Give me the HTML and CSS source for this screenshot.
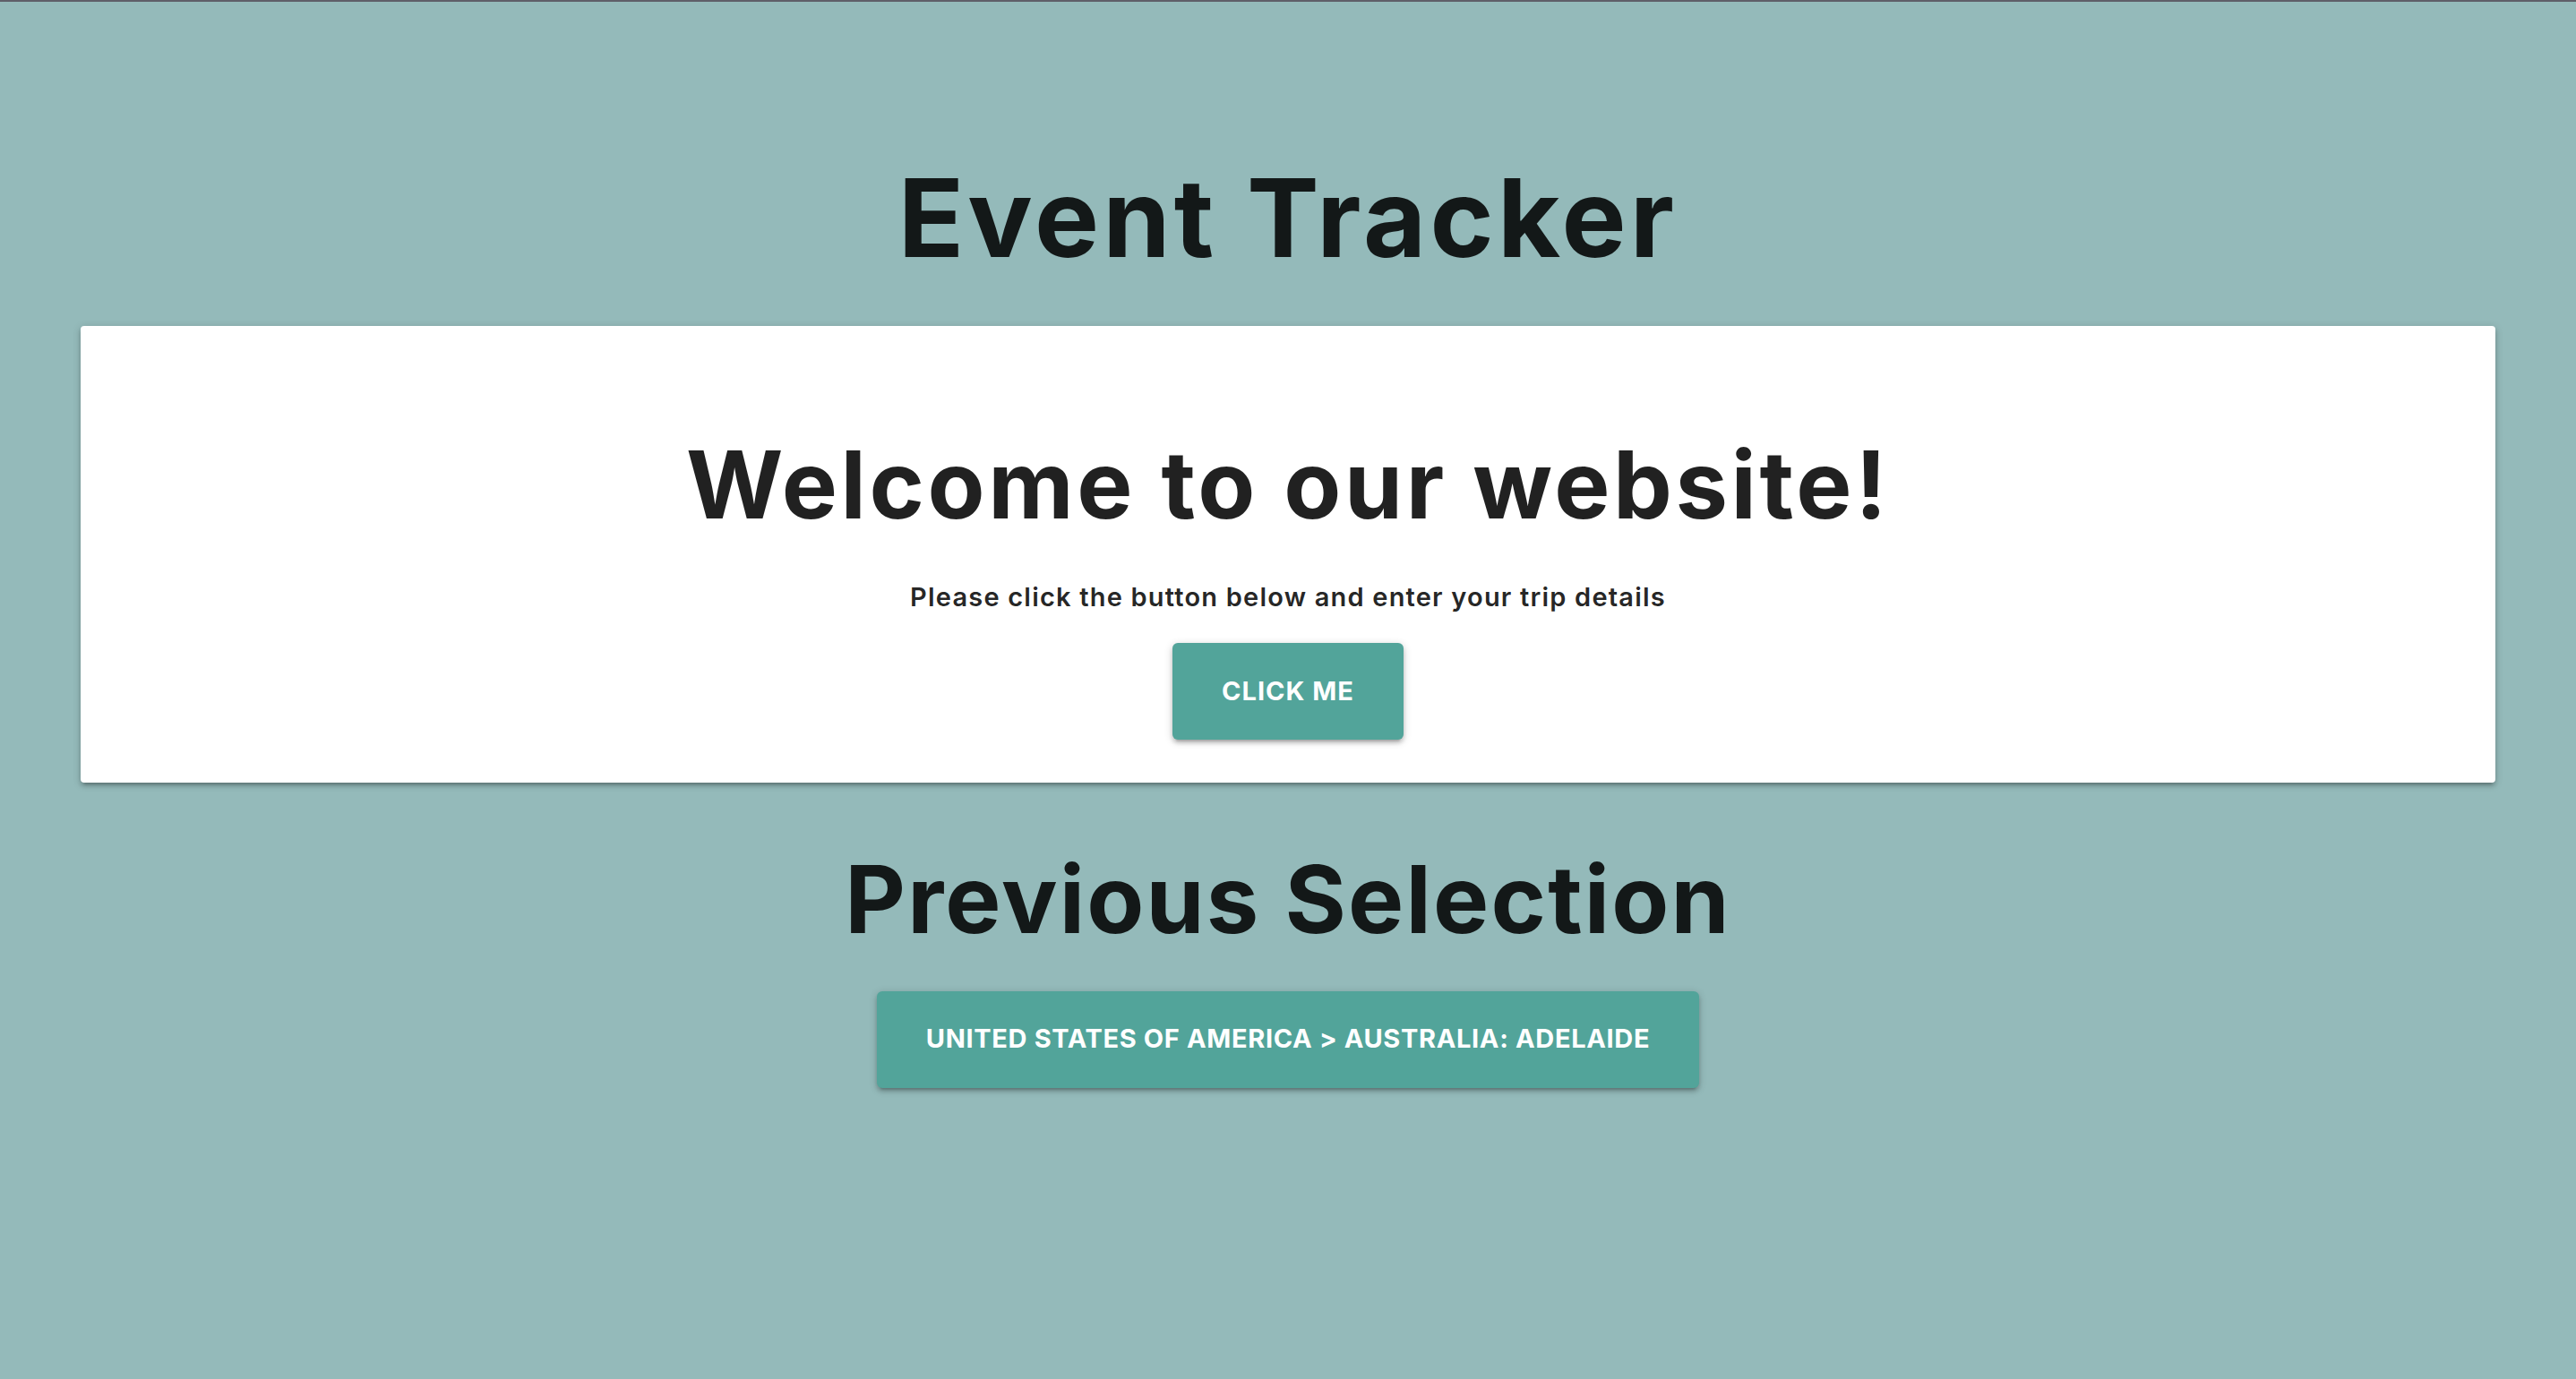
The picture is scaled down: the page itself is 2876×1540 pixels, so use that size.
FILE: index.html
```html
<!DOCTYPE html>
<html lang="en">
<head>
<meta charset="utf-8">
<title>Event Tracker</title>
<link rel="stylesheet" href="styles.css">
</head>
<body>
<div class="topline"></div>
<main class="page">
  <h1 class="title">Event Tracker</h1>
  <section class="card">
    <h2 class="heading welcome">Welcome to our website!</h2>
    <p class="subtitle">Please click the button below and enter your trip details</p>
    <button class="btn">Click me</button>
  </section>
  <h2 class="heading previous">Previous Selection</h2>
  <button class="btn btn-wide">United States of America &gt; Australia: Adelaide</button>
</main>
</body>
</html>
```

FILE: styles.css
```css
html, body {
  margin: 0;
  padding: 0;
}
body {
  background: #94baba;
  font-family: "Inter", "Open Sans", sans-serif;
  color: rgba(0, 0, 0, 0.87);
  min-height: 1540px;
}
.topline {
  height: 2px;
  background: #5f5f69;
}
.page {
  display: flex;
  flex-direction: column;
  align-items: center;
  padding: 181px 86px 0 86px;
}
.title {
  margin: 0;
  font-size: 121px;
  line-height: 1;
  font-weight: 700;
  letter-spacing: 4.2px;
}
.card {
  align-self: stretch;
  margin: 60px 4px 0 4px;
  background: #fff;
  border-radius: 4px;
  box-shadow: 0 4px 4px 0 rgba(0,0,0,0.14), 0 6px 2px -4px rgba(0,0,0,0.12), 0 2px 10px 0 rgba(0,0,0,0.2);
  display: flex;
  flex-direction: column;
  align-items: center;
  padding: 125px 0 48px 0;
}
.heading {
  margin: 0;
  font-size: 104.5px;
  line-height: 1;
  font-weight: 700;
}
.welcome {
  letter-spacing: 3.6px;
}
.subtitle {
  margin: 56px 0 0 0;
  font-size: 29px;
  line-height: 1.2;
  font-weight: 600;
  letter-spacing: 1.2px;
}
.card .btn {
  margin-top: 34px;
}
.previous {
  margin-top: 78px;
  letter-spacing: 2.2px;
}
.previous + .btn {
  margin-top: 50px;
}
.btn {
  height: 108px;
  padding: 0 55px;
  border: none;
  border-radius: 6px;
  background: #52a49a;
  color: #fff;
  font-family: inherit;
  font-size: 29px;
  line-height: 1.2;
  font-weight: 700;
  text-transform: uppercase;
  letter-spacing: 1px;
  box-shadow: 0 4px 4px 0 rgba(0,0,0,0.14), 0 6px 2px -4px rgba(0,0,0,0.12), 0 2px 10px 0 rgba(0,0,0,0.2);
  cursor: pointer;
}
.btn-wide {
  letter-spacing: 0.65px;
}
```
